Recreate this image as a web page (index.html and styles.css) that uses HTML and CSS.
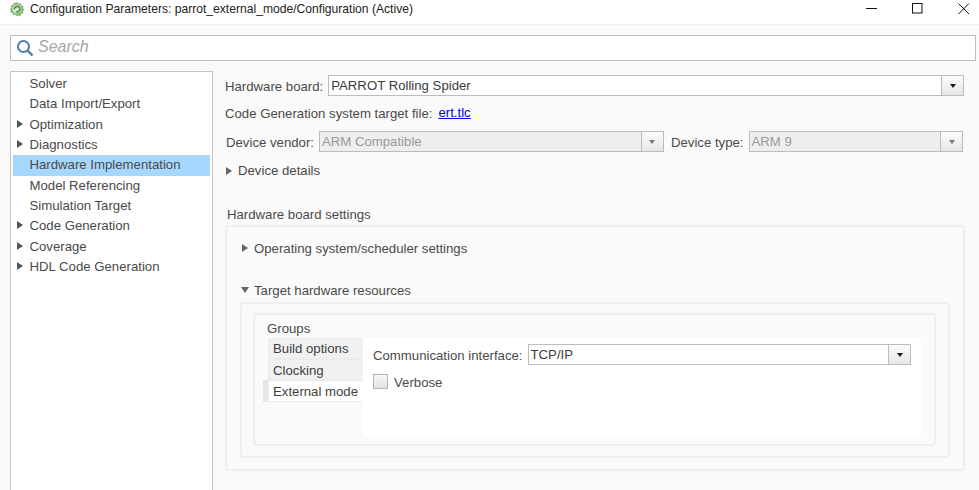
FILE: index.html
```html
<!DOCTYPE html>
<html lang="en">
<head>
<meta charset="utf-8">
<title>Configuration Parameters</title>
<link rel="stylesheet" href="styles.css">
</head>
<body>
<div class="window">
  <header class="titlebar">
    <svg class="app-icon" width="16" height="16" viewBox="0 0 16 16">
      <path d="M8 .8l1.4 2 2.3-.8.5 2.4 2.4.5-.8 2.3 2 1.4-2 1.4.6 2.4-2.4.4-.6 2.4-2.3-.7L8 15.6l-1.4-2-2.4.7-.5-2.4-2.4-.5.7-2.3L.5 8.2l1.9-1.5-.6-2.3 2.4-.5.5-2.3 2.3.7z" fill="#7fb56f"/>
      <circle cx="8" cy="8" r="4.6" fill="#dbe9d3"/>
      <path d="M5.4 8.4a2.8 2.8 0 1 1 1.4 2.2" fill="none" stroke="#4c8a45" stroke-width="1.6"/>
    </svg>
    <span class="title-text">Configuration Parameters: parrot_external_mode/Configuration (Active)</span>
    <div class="win-controls">
      <svg class="win-btn" width="12" height="12" viewBox="0 0 12 12"><path d="M0 5.5h11" stroke="#111" fill="none"/></svg>
      <svg class="win-btn" width="12" height="12" viewBox="0 0 12 12"><rect x=".5" y=".5" width="9.5" height="9.5" stroke="#111" fill="none"/></svg>
      <svg class="win-btn" width="12" height="12" viewBox="0 0 12 12"><path d="M.5.5l10.5 10.5M11 .5L.5 11" stroke="#111" fill="none"/></svg>
    </div>
  </header>

  <div class="content">
    <div class="search">
      <svg width="18" height="18" viewBox="0 0 18 18"><circle cx="7.5" cy="7.5" r="5.5" fill="none" stroke="#4b7ba6" stroke-width="2"/><path d="M11.5 11.5l5 5" stroke="#4b7ba6" stroke-width="2.4"/></svg>
      <span class="search-text">Search</span>
    </div>

    <div class="columns">
      <nav class="tree">
        <div class="tree-item">Solver</div>
        <div class="tree-item">Data Import/Export</div>
        <div class="tree-item has-arrow">Optimization</div>
        <div class="tree-item has-arrow">Diagnostics</div>
        <div class="tree-item selected">Hardware Implementation</div>
        <div class="tree-item">Model Referencing</div>
        <div class="tree-item">Simulation Target</div>
        <div class="tree-item has-arrow">Code Generation</div>
        <div class="tree-item has-arrow">Coverage</div>
        <div class="tree-item has-arrow">HDL Code Generation</div>
      </nav>

      <main class="pane">
        <div class="row board-row">
          <label class="lbl">Hardware board:</label>
          <div class="combo grow"><span class="combo-val">PARROT Rolling Spider</span><span class="combo-btn"><i class="caret"></i></span></div>
        </div>
        <div class="row target-row">
          <span class="lbl">Code Generation system target file:</span>
          <a class="link" href="#">ert.tlc</a>
        </div>
        <div class="row device-row">
          <label class="lbl">Device vendor:</label>
          <div class="combo disabled vendor"><span class="combo-val">ARM Compatible</span><span class="combo-btn"><i class="caret"></i></span></div>
          <label class="lbl type-lbl">Device type:</label>
          <div class="combo disabled grow"><span class="combo-val">ARM 9</span><span class="combo-btn"><i class="caret"></i></span></div>
        </div>
        <div class="disclosure details"><i class="tri"></i>Device details</div>

        <h2 class="section-title">Hardware board settings</h2>
        <section class="box settings">
          <div class="disclosure os"><i class="tri"></i>Operating system/scheduler settings</div>
          <div class="disclosure target"><i class="tri open"></i>Target hardware resources</div>
          <div class="box resources">
            <div class="box groups">
              <div class="groups-title">Groups</div>
              <div class="groups-body">
                <div class="tabs">
                  <div class="tab">Build options</div>
                  <div class="tab">Clocking</div>
                  <div class="tab active">External mode</div>
                </div>
                <div class="tab-page">
                  <div class="row comm-row">
                    <label class="lbl">Communication interface:</label>
                    <div class="combo grow"><span class="combo-val">TCP/IP</span><span class="combo-btn"><i class="caret"></i></span></div>
                  </div>
                  <label class="check-row"><span class="checkbox"></span>Verbose</label>
                </div>
              </div>
            </div>
          </div>
        </section>
      </main>
    </div>
  </div>
</div>
</body>
</html>
```

FILE: styles.css
```css
* { box-sizing: border-box; }
html, body { margin: 0; height: 100%; }
body {
  width: 979px;
  height: 490px;
  overflow: hidden;
  font-family: "Liberation Sans", Arial, sans-serif;
  font-size: 13.2px;
  color: #4a4a4a;
  background: #fafafa;
}
.window { height: 490px; display: flex; flex-direction: column; }

.titlebar {
  height: 25px;
  flex: none;
  background: #fff;
  border-bottom: 1px solid #f1f1f1;
  display: flex;
  align-items: center;
  padding-left: 9px;
  padding-bottom: 6px;
  color: #222;
  font-size: 12.12px;
}
.app-icon { flex: none; }
.title-text { margin-left: 5px; }
.win-controls { margin-left: auto; display: flex; gap: 34px; padding-right: 9px; }

.content { flex: 1; min-height: 0; padding: 10px 3px 0 10px; display: flex; flex-direction: column; }

.search {
  height: 26px;
  flex: none;
  background: #fff;
  border: 1px solid #bdbdbd;
  display: flex;
  align-items: center;
  padding-left: 5px;
  gap: 4px;
}
.search-text { font-style: italic; font-size: 16px; color: #a6a6a6; padding-bottom: 2px; }

.columns { flex: 1; min-height: 0; display: flex; margin-top: 10px; }

.tree {
  width: 203px;
  flex: none;
  height: 430px;
  background: #fff;
  border: 1px solid #c4c4c4;
  padding: 2px 2px 0;
}
.tree-item { height: 20.33px; line-height: 20.33px; padding-left: 16.5px; position: relative; white-space: nowrap; }
.tree-item.selected { background: #a6d8ff; }
.has-arrow::before {
  content: "";
  position: absolute;
  left: 4px;
  top: 5px;
  border-left: 6px solid #555;
  border-top: 4px solid transparent;
  border-bottom: 4px solid transparent;
}

.pane { width: 753px; flex: none; padding: 4px 0 0 12px; }
.row { display: flex; align-items: center; }
.lbl { white-space: nowrap; padding-top: 1px; }
.grow { flex: 1; min-width: 0; }

.combo {
  height: 21px;
  display: flex;
  background: #fff;
  border: 1px solid #bcbcbc;
  color: #3c3c3c;
}
.combo-val { flex: 1; padding-left: 2px; line-height: 20px; white-space: nowrap; }
.combo-btn {
  width: 22px;
  flex: none;
  border-left: 1px solid #bcbcbc;
  background: linear-gradient(#fbfbfb, #e6e6e6);
  display: flex;
  align-items: center;
  justify-content: center;
}
.caret { width: 0; height: 0; border-top: 4px solid #1a1a1a; border-left: 3.5px solid transparent; border-right: 3.5px solid transparent; }
.combo.disabled { background: #eeeeee; color: #9a9a9a; }
.combo.disabled .caret { border-top-color: #777; }

.board-row { gap: 5px; width: 739px; }
.target-row { margin-top: 8px; height: 19px; gap: 6px; }
.target-row .lbl { padding-top: 0; }
.link { color: #0000ee; text-decoration: underline; margin-top: -2px; }
.device-row { margin-top: 8px; padding-left: 1px; width: 738px; }
.vendor { width: 345px; margin-left: 5px; flex: none; }
.type-lbl { margin-left: 7px; margin-right: 5px; }

.disclosure { display: flex; align-items: center; white-space: nowrap; height: 18px; }
.tri {
  width: 0;
  height: 0;
  flex: none;
  margin-right: 6px;
  border-left: 6px solid #666;
  border-top: 4px solid transparent;
  border-bottom: 4px solid transparent;
}
.tri.open {
  border-left: 4px solid transparent;
  border-right: 4px solid transparent;
  border-top: 6px solid #666;
  border-bottom: 0;
  margin-right: 5px;
  margin-left: -1px;
}
.details { margin-top: 10px; padding-left: 1px; padding-bottom: 1px; }

.section-title { font-size: 13.2px; font-weight: normal; margin: 26px 0 0 2px; height: 18px; line-height: 18px; }

.box { background: #fafafa; border: 2px solid #efefef; border-radius: 4px; }
.settings { width: 740px; height: 246px; margin-top: 1px; padding: 0 13px; }
.os { margin-top: 12px; padding-left: 2px; }
.target { margin-top: 24px; padding-left: 2px; }
.resources { height: 156px; margin-top: 3px; padding: 9px 13px 0 11px; width: 710px; }
.groups { height: 133px; padding: 5px 0 0 12px; width: 683px; }
.groups-title { height: 18px; line-height: 18px; }
.groups-body { display: flex; height: 99px; }
.tabs { width: 96px; flex: none; padding-left: 1px; }
.tab {
  height: 21px;
  line-height: 20px;
  padding-left: 4px;
  background: #f1f1f1;
  border: 1px solid #ececec;
  border-right: 0;
  color: #3f3f3f;
  white-space: nowrap;
}
.tab + .tab { line-height: 21px; }
.tab.active {
  height: 22px;
  background: #fff;
  box-shadow: -5px 0 0 #e6e6e6;
}
.tab-page { width: 558px; height: 99px; background: #fff; padding: 6px 10px 0; flex: none; }
.comm-row { gap: 5px; }
.check-row { display: flex; align-items: flex-start; gap: 6px; margin-top: 9px; height: 15px; line-height: 17px; }
.checkbox { width: 15px; height: 15px; flex: none; border: 1px solid #b4b4b4; background: linear-gradient(#f6f6f6, #e4e4e4); }
```
